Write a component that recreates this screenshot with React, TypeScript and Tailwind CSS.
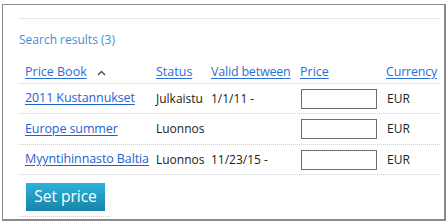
import React from "react";

const rows = [
  { name: "2011 Kustannukset", status: "Julkaistu", valid: "1/1/11 -", h: "h-[30px]" },
  { name: "Europe summer", status: "Luonnos", valid: "", h: "h-[31px]" },
  { name: "Myyntihinnasto Baltia", status: "Luonnos", valid: "11/23/15 -", h: "h-[30px]" },
];

const cols = "grid grid-cols-[131px_55px_89px_86px_1fr]";

export default function App() {
  return (
    <div
      className="w-[448px] h-[224px] bg-white pl-[2px] pt-[4px]"
      style={{ fontFamily: '"Open Sans", "Noto Sans", sans-serif' }}
    >
      <div className="w-[444px] h-[217px] border-l border-t border-r-2 border-b-2 border-[#8a8a8a] pl-[16px] pr-[4px] pt-[13px] flex flex-col">
        <div className="border-t border-dotted border-[#cfcfcf]" />
        <div className="mt-[12px] text-[12px] leading-[18px] text-[#3c8ed4]">Search results (3)</div>
        <div className="mt-[13px]">
          <div className={`${cols} pl-[6px] h-[22px] items-center text-[12.5px] text-[#2a6fd6] border-b border-dotted border-[#cfcfcf]`}>
            <div className="flex items-center gap-[6px]">
              <span className="underline underline-offset-2">Price Book</span>
              <svg width="9" height="6" viewBox="0 0 9 6" className="ml-[4px]">
                <path d="M1 5 L4.5 1.5 L8 5" stroke="#555" strokeWidth="1.5" fill="none" />
              </svg>
            </div>
            <span className="underline underline-offset-2">Status</span>
            <span className="underline underline-offset-2 whitespace-nowrap tracking-[-0.2px]">Valid between</span>
            <span className="underline underline-offset-2">Price</span>
            <span className="underline underline-offset-2 tracking-[-0.2px]">Currency</span>
          </div>
          {rows.map((r) => (
            <div
              key={r.name}
              className={`${cols} pl-[6px] ${r.h} items-center text-[12px] text-[#222] border-b border-dotted border-[#cfcfcf]`}
            >
              <span className="text-[12.5px] text-[#1f63d0] underline underline-offset-2 whitespace-nowrap tracking-[-0.1px]">{r.name}</span>
              <span>{r.status}</span>
              <span>{r.valid}</span>
              <div className="pl-[1px]">
                <div className="w-[76px] h-[20px] border border-[#6e6e6e] bg-white" />
              </div>
              <span className="pl-[1px]">EUR</span>
            </div>
          ))}
        </div>
        <div className="mt-[8px] ml-[7px] w-[79px] h-[28px] flex items-center justify-center text-white text-[15.5px] bg-gradient-to-b from-[#2bb3dc] to-[#1a83a7]">
          Set price
        </div>
        <div className="mt-[5px] w-[91px] border-t border-dotted border-[#cfcfcf]" />
      </div>
    </div>
  );
}
